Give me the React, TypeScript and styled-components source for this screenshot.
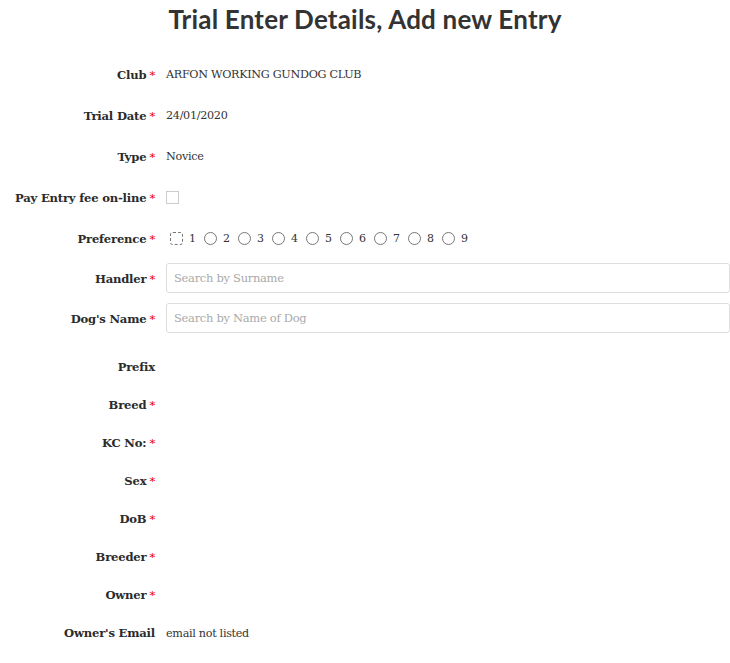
import styled, { createGlobalStyle } from 'styled-components'

const GlobalStyle = createGlobalStyle`
  html, body {
    margin: 0;
    padding: 0;
    background: #fff;
  }
  body {
    font-family: "DejaVu Serif", "Liberation Serif", serif;
    color: #333;
  }
`

const Page = styled.div`
  width: 730px;
  overflow: hidden;
`

const Title = styled.h2`
  margin: 0;
  height: 36px;
  line-height: 38px;
  text-align: center;
  font-family: "Lato", "Open Sans", sans-serif;
  font-weight: 700;
  font-size: 26px;
  letter-spacing: 0.2px;
  color: #333;
  padding-left: 0;
`

const Form = styled.div`
  padding-top: 18px;
`

const Row = styled.div<{ $h: number; $top?: number }>`
  display: grid;
  grid-template-columns: 155px 1fr;
  column-gap: 11px;
  height: ${p => p.$h}px;
  margin-top: ${p => p.$top || 0}px;
  align-items: center;
`

const Label = styled.label`
  text-align: right;
  font-weight: 700;
  font-size: 11.6px;
  letter-spacing: -0.2px;
  color: #2b2b2b;
  white-space: nowrap;
`

const Req = styled.span`
  color: #e00;
  font-weight: 400;
  margin-left: 3px;
`

const Value = styled.div`
  font-size: 11.2px;
  color: #333;
  white-space: nowrap;
  letter-spacing: -0.3px;
`

const Checkbox = styled.span`
  display: block;
  width: 11px;
  height: 11px;
  border: 1px solid #ccc;
  background: #fff;
`

const Radios = styled.div`
  display: flex;
  align-items: center;
  padding-left: 4px;
`

const RadioItem = styled.span`
  display: inline-flex;
  align-items: center;
  margin-right: 8px;
  font-size: 11px;
  color: #333;
`

const RadioDot = styled.span<{ $focus?: boolean }>`
  display: inline-block;
  box-sizing: border-box;
  width: 13px;
  height: 13px;
  border: 1px ${p => (p.$focus ? 'dashed #777' : 'solid #777')};
  border-radius: ${p => (p.$focus ? '3px' : '50%')};
  background: #fff;
  margin-right: 6px;
`

const Input = styled.input`
  box-sizing: border-box;
  width: 564px;
  height: 30px;
  margin-bottom: 2px;
  padding: 0 7px;
  border: 1px solid #ddd;
  border-radius: 3px;
  font-family: "DejaVu Serif", "Liberation Serif", serif;
  font-size: 11.5px;
  letter-spacing: -0.3px;
  color: #333;
  outline: none;
  &::placeholder {
    color: #aaa;
  }
`

const details: { label: string; required: boolean; value?: string }[] = [
  { label: 'Prefix', required: false },
  { label: 'Breed', required: true },
  { label: 'KC No:', required: true },
  { label: 'Sex', required: true },
  { label: 'DoB', required: true },
  { label: 'Breeder', required: true },
  { label: 'Owner', required: true },
  { label: "Owner's Email", required: false, value: 'email not listed' },
]

export default function App() {
  return (
    <Page>
      <GlobalStyle />
      <Title>Trial Enter Details, Add new Entry</Title>
      <Form>
        <Row $h={41}>
          <Label>Club<Req>*</Req></Label>
          <Value>ARFON WORKING GUNDOG CLUB</Value>
        </Row>
        <Row $h={41}>
          <Label>Trial Date<Req>*</Req></Label>
          <Value>24/01/2020</Value>
        </Row>
        <Row $h={41}>
          <Label>Type<Req>*</Req></Label>
          <Value>Novice</Value>
        </Row>
        <Row $h={41}>
          <Label>Pay Entry fee on-line<Req>*</Req></Label>
          <Checkbox />
        </Row>
        <Row $h={41}>
          <Label>Preference<Req>*</Req></Label>
          <Radios>
            {[1, 2, 3, 4, 5, 6, 7, 8, 9].map(n => (
              <RadioItem key={n}>
                <RadioDot $focus={n === 1} />
                {n}
              </RadioItem>
            ))}
          </Radios>
        </Row>
        <Row $h={40}>
          <Label>Handler<Req>*</Req></Label>
          <Input placeholder="Search by Surname" />
        </Row>
        <Row $h={40}>
          <Label>Dog's Name<Req>*</Req></Label>
          <Input placeholder="Search by Name of Dog" />
        </Row>
        {details.map((d, i) => (
          <Row key={d.label} $h={38} $top={i === 0 ? 9 : 0}>
            <Label>
              {d.label}
              {d.required && <Req>*</Req>}
            </Label>
            <Value>{d.value || ''}</Value>
          </Row>
        ))}
      </Form>
    </Page>
  )
}
